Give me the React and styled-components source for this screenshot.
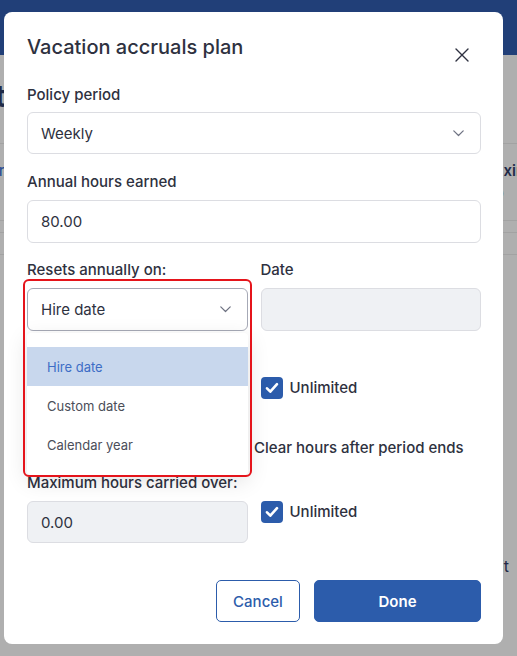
import React from 'react'
import styled, { createGlobalStyle } from 'styled-components'

const GlobalStyle = createGlobalStyle`
  html, body {
    margin: 0;
    padding: 0;
    background: #afafaf;
    font-family: Inter, "Noto Sans", sans-serif;
    color: #2e3140;
  }
  * { box-sizing: border-box; }
`

const Page = styled.div`
  position: relative;
  width: 517px;
  height: 656px;
  overflow: hidden;
  background: #afafaf;
`

const Header = styled.div`
  height: 55px;
  background: #213f78;
`

const BackTitle = styled.div`
  height: 88px;
  display: flex;
  align-items: center;
  font-size: 30px;
  font-weight: 700;
  color: #1f2a48;
  margin-left: -69px;
  padding-bottom: 6px;
`

const BackTable = styled.div`
  border-top: 1px solid #a2a2a2;
`

const BackRow = styled.div`
  height: ${p => p.h}px;
  border-bottom: 1px solid #a2a2a2;
  display: flex;
  justify-content: space-between;
  align-items: center;
  font-size: 15px;
  font-weight: 600;
  color: #1f2a48;
`

const BackCell = styled.div`
  display: flex;
  flex-direction: column;
  gap: 4px;
  width: ${p => p.w || 'auto'};
  margin: ${p => p.m};
  color: ${p => p.c || '#1f2a48'};
  font-weight: ${p => p.fw || 600};
`

const BackFoot = styled.div`
  display: flex;
  justify-content: flex-end;
  margin-top: 301px;
  margin-right: 8px;
  font-size: 16px;
  line-height: 20px;
  color: #1f2a48;
`

const Dialog = styled.div`
  position: absolute;
  left: 4px;
  top: 12px;
  width: 499px;
  height: 632px;
  background: #fff;
  border-radius: 8px;
  padding: 21px 22px 22px 23px;
  display: flex;
  flex-direction: column;
`

const TitleRow = styled.div`
  display: flex;
  justify-content: space-between;
  align-items: flex-start;
  margin-bottom: 23px;
`

const Title = styled.h2`
  margin: 0;
  font-size: 20px;
  line-height: 28px;
  font-weight: 500;
  color: #2e3140;
`

const Close = styled.button`
  border: 0;
  background: none;
  padding: 0;
  margin: 15px 12px 0 0;
  width: 14px;
  height: 14px;
  display: flex;
  cursor: pointer;
`

const Field = styled.div`
  display: flex;
  flex-direction: column;
  margin-bottom: ${p => p.mb ?? 18}px;
  position: relative;
`

const Label = styled.label`
  font-size: 15px;
  line-height: 20px;
  font-weight: 500;
  color: #2e3140;
  margin-bottom: ${p => p.mb ?? 8}px;
`

const Box = styled.div`
  height: ${p => p.h || 43}px;
  border: 1px solid ${p => (p.active ? '#a6a9b6' : '#dcdde2')};
  border-radius: 6px;
  background: ${p => (p.disabled ? '#eff1f4' : '#fff')};
  display: flex;
  align-items: center;
  justify-content: space-between;
  padding: 0 16px 0 13px;
  font-size: 15px;
  color: #2e3140;
`

const Grid = styled.div`
  display: grid;
  grid-template-columns: 1fr 1fr;
  column-gap: 13px;
  margin-top: ${p => p.mt || 0}px;
`

const CheckRow = styled.div`
  display: flex;
  align-items: flex-start;
  gap: 7px;
  font-size: 15px;
  font-weight: 500;
  color: #2e3140;
  line-height: 22px;
  margin-left: ${p => p.ml || 0}px;
`

const Check = styled.span`
  width: 22px;
  height: 22px;
  border-radius: 4px;
  background: ${p => (p.on ? '#2c5cab' : '#fff')};
  border: ${p => (p.on ? '0' : '1px solid #c9ccd4')};
  display: flex;
  align-items: center;
  justify-content: center;
  flex: none;
`

const SelectWrap = styled.div`
  position: relative;
`

const Menu = styled.ul`
  position: absolute;
  z-index: 2;
  top: calc(100% + 2px);
  left: 0;
  width: 100%;
  margin: 0;
  padding: 14px 0 11px;
  list-style: none;
  background: #fff;
  border-radius: 4px;
  box-shadow: 0 6px 22px rgba(0, 0, 0, 0.12);
`

const Option = styled.li`
  height: 39px;
  display: flex;
  align-items: center;
  padding-left: 20px;
  font-size: 13px;
  color: ${p => (p.selected ? '#3d6dc6' : '#4b4e59')};
  background: ${p => (p.selected ? '#c8d7ed' : 'transparent')};
`

const Highlight = styled.div`
  position: absolute;
  z-index: 3;
  top: -9px;
  left: -4px;
  width: 229px;
  height: 198px;
  border: 2px solid #e5141b;
  border-radius: 6px;
  pointer-events: none;
`

const Footer = styled.div`
  margin-top: auto;
  display: flex;
  justify-content: flex-end;
  gap: 14px;
`

const Button = styled.button`
  height: 42px;
  width: ${p => p.w}px;
  border-radius: 5px;
  font-family: Inter, "Noto Sans", sans-serif;
  font-size: 15px;
  font-weight: ${p => (p.primary ? 600 : 500)};
  border: 1px solid #2c5cab;
  background: ${p => (p.primary ? '#2c5cab' : '#fff')};
  color: ${p => (p.primary ? '#fff' : '#2c5cab')};
  cursor: pointer;
`

const Chevron = () => (
  <svg width="11" height="7" viewBox="0 0 11 7" fill="none">
    <path d="M0.8 0.9l4.7 4.6L10.2 0.9" stroke="#6e7282" strokeWidth="1.2" strokeLinecap="round" strokeLinejoin="round" />
  </svg>
)

const Tick = () => (
  <svg width="14" height="12" viewBox="0 0 14 12" fill="none">
    <path d="M2 6.3l3.3 3.4L12 2.2" stroke="#fff" strokeWidth="2.6" strokeLinecap="round" strokeLinejoin="round" />
  </svg>
)

const CheckBox = ({ on, label, ml }) => (
  <CheckRow ml={ml}>
    <Check on={on}>{on && <Tick />}</Check>
    {label}
  </CheckRow>
)

const options = ['Hire date', 'Custom date', 'Calendar year']

export default function App() {
  return (
    <>
      <GlobalStyle />
      <Page>
        <Header />
        <BackTitle>Plant</BackTitle>
        <BackTable>
          <BackRow h={77}>
            <BackCell m="0 0 0 -29px" c="#2a4f94" fw={500}>
              <span>Accr</span>
              <span>&nbsp;</span>
            </BackCell>
            <BackCell w="36px">
              <span>Maximum</span>
              <span style={{ fontWeight: 500 }}>5.0</span>
            </BackCell>
          </BackRow>
          <BackRow h={12} />
          <BackRow h={22} />
        </BackTable>
        <BackFoot>Edit</BackFoot>

        <Dialog>
          <TitleRow>
            <Title>Vacation accruals plan</Title>
            <Close aria-label="Close">
              <svg width="14" height="14" viewBox="0 0 14 14">
                <path d="M1 1l12 12M13 1L1 13" stroke="#2e3140" strokeWidth="1.4" strokeLinecap="round" />
              </svg>
            </Close>
          </TitleRow>

          <Field mb={18}>
            <Label mb={7}>Policy period</Label>
            <Box h={42}>
              Weekly
              <Chevron />
            </Box>
          </Field>

          <Field mb={17}>
            <Label>Annual hours earned</Label>
            <Box>80.00</Box>
          </Field>

          <Grid>
            <Field>
              <Label>Resets annually on:</Label>
              <SelectWrap>
                <Box active>
                  Hire date
                  <Chevron />
                </Box>
                <Menu>
                  {options.map((o, i) => (
                    <Option key={o} selected={i === 0}>{o}</Option>
                  ))}
                </Menu>
                <Highlight />
              </SelectWrap>
            </Field>
            <Field>
              <Label>Date</Label>
              <Box disabled />
            </Field>
          </Grid>

          <Grid>
            <Field mb={17}>
              <Label>Maximum hours accrued:</Label>
              <Box disabled>0.00</Box>
            </Field>
            <Field mb={17}>
              <Label>&nbsp;</Label>
              <CheckBox on label="Unlimited" />
            </Field>
          </Grid>

          <CheckBox ml={198} label="Clear hours after period ends" />

          <Grid mt={14}>
            <Field mb={0}>
              <Label>Maximum hours carried over:</Label>
              <Box h={42} disabled>0.00</Box>
            </Field>
            <Field mb={0}>
              <Label>&nbsp;</Label>
              <CheckBox on label="Unlimited" />
            </Field>
          </Grid>

          <Footer>
            <Button w={84}>Cancel</Button>
            <Button primary w={167}>Done</Button>
          </Footer>
        </Dialog>
      </Page>
    </>
  )
}
